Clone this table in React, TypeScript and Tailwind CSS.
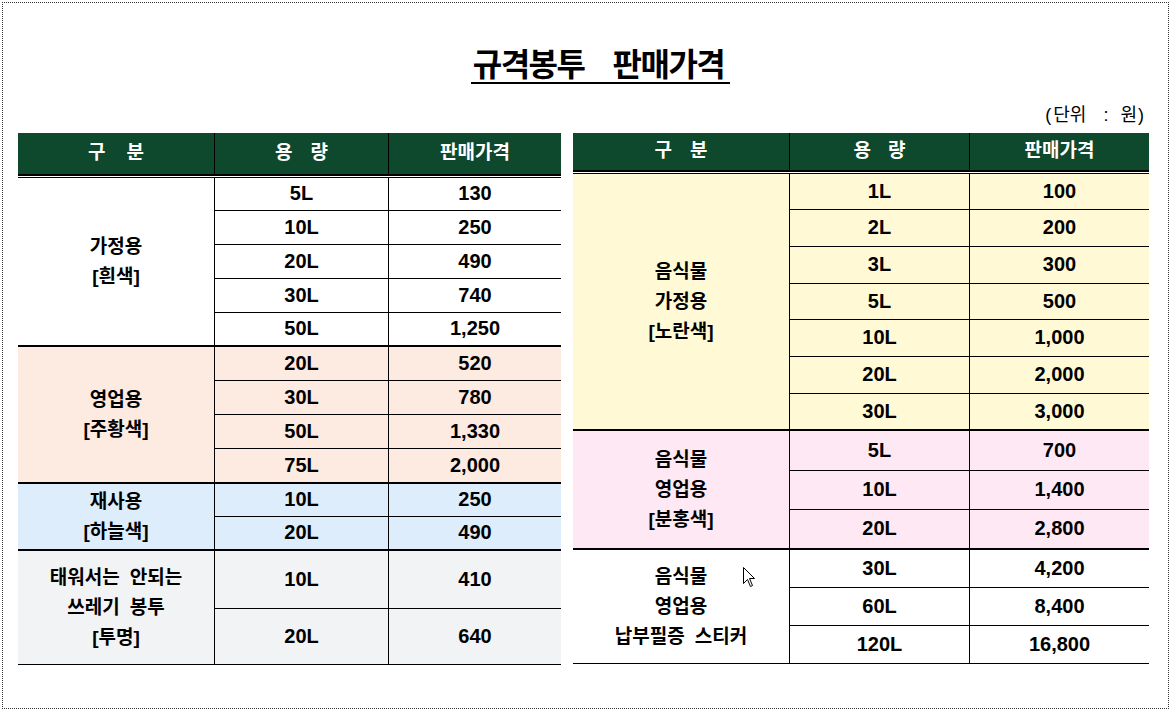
import React from "react";

type Row = [string, string, string];

interface Group {
  label: string[];
  bg: string;
  rows: Row[];
  last?: boolean;
}

const leftGroups: Group[] = [
  {
    label: ["가정용", "[흰색]"],
    bg: "bg-white",
    rows: [
      ["5L", "130", "h-[33px]"],
      ["10L", "250", "h-[34px]"],
      ["20L", "490", "h-[34px]"],
      ["30L", "740", "h-[34px]"],
      ["50L", "1,250", "h-[32px]"],
    ],
  },
  {
    label: ["영업용", "[주황색]"],
    bg: "bg-[#fdeae1]",
    rows: [
      ["20L", "520", "h-[34px]"],
      ["30L", "780", "h-[34px]"],
      ["50L", "1,330", "h-[34px]"],
      ["75L", "2,000", "h-[33px]"],
    ],
  },
  {
    label: ["재사용", "[하늘색]"],
    bg: "bg-[#ddedfc]",
    rows: [
      ["10L", "250", "h-[33px]"],
      ["20L", "490", "h-[32px]"],
    ],
  },
  {
    label: ["태워서는 안되는", "쓰레기 봉투", "[투명]"],
    bg: "bg-[#f2f3f5]",
    rows: [
      ["10L", "410", "h-[58px]"],
      ["20L", "640", "h-[55px]"],
    ],
    last: true,
  },
];

const rightGroups: Group[] = [
  {
    label: ["음식물", "가정용", "[노란색]"],
    bg: "bg-[#fff9d6]",
    rows: [
      ["1L", "100", "h-[36px]"],
      ["2L", "200", "h-[37px]"],
      ["3L", "300", "h-[37px]"],
      ["5L", "500", "h-[36px]"],
      ["10L", "1,000", "h-[37px]"],
      ["20L", "2,000", "h-[37px]"],
      ["30L", "3,000", "h-[35px]"],
    ],
  },
  {
    label: ["음식물", "영업용", "[분홍색]"],
    bg: "bg-[#fde8f3]",
    rows: [
      ["5L", "700", "h-[40px]"],
      ["10L", "1,400", "h-[39px]"],
      ["20L", "2,800", "h-[38px]"],
    ],
  },
  {
    label: ["음식물", "영업용", "납부필증 스티커"],
    bg: "bg-white",
    rows: [
      ["30L", "4,200", "h-[38px]"],
      ["60L", "8,400", "h-[38px]"],
      ["120L", "16,800", "h-[37px]"],
    ],
    last: true,
  },
];

function Label({ text }: { text: string }) {
  const parts = text.split(" ");
  return (
    <div className="whitespace-nowrap">
      {parts.map((p, i) => (
        <React.Fragment key={i}>
          {i > 0 && <span className="inline-block w-[10px]" />}
          {p}
        </React.Fragment>
      ))}
    </div>
  );
}

function Section({ g, w1, w2 }: { g: Group; w1: string; w2: string }) {
  return (
    <div className={`flex ${g.bg} ${g.last ? "border-b" : "border-b-2"} border-black`}>
      <div
        className={`${w1} shrink-0 border-r border-black flex flex-col items-center justify-center text-[19px] leading-[30px] font-bold`}
      >
        {g.label.map((l) => (
          <Label key={l} text={l} />
        ))}
      </div>
      <div className="flex-1 flex flex-col">
        {g.rows.map(([size, price, h], i) => (
          <div
            key={i}
            className={`flex ${h} ${i < g.rows.length - 1 ? "border-b border-black" : ""}`}
          >
            <div className={`${w2} shrink-0 border-r border-black flex items-center justify-center pb-[2px] text-[20px] font-bold`}>
              {size}
            </div>
            <div className="flex-1 flex items-center justify-center pb-[2px] text-[20px] font-bold">{price}</div>
          </div>
        ))}
      </div>
    </div>
  );
}

function Header({ w1, w2, h, gap1, gap2 }: { w1: string; w2: string; h: string; gap1: string; gap2: string }) {
  return (
    <>
      <div className={`flex ${h} bg-[#0e482d] text-white font-bold text-[19px]`}>
        <div className={`${w1} shrink-0 border-r border-black flex items-center justify-center ${gap1}`}>
          <span>구</span>
          <span>분</span>
        </div>
        <div className={`${w2} shrink-0 border-r border-black flex items-center justify-center ${gap2}`}>
          <span>용</span>
          <span>량</span>
        </div>
        <div className="flex-1 flex items-center justify-center">판매가격</div>
      </div>
      <div className="h-[2px] bg-black" />
      <div className="h-px bg-white" />
      <div className="h-px bg-black" />
    </>
  );
}

export default function App() {
  return (
    <div className="relative w-[1171px] h-[711px] bg-white p-[2px] text-black font-[family-name:'Liberation_Sans','Noto_Sans_CJK_KR',sans-serif]">
      <div className="w-[1167px] h-[707px] border border-dotted border-[#333]">
        {/* title */}
        <div className="flex justify-center pl-[30px] mt-[46px]">
          <div className="inline-block border-b-2 border-black pb-[1px] pl-[2px] pr-[6px] text-[32px] leading-[32px] font-bold tracking-[-1.5px] whitespace-nowrap">
            규격봉투<span className="inline-block w-[28px]" />판매가격
          </div>
        </div>

        <div className="flex justify-end pr-[24px] mt-[21px] h-[21px] text-[18px] leading-[21px]">
          <span>(</span>
          <span className="ml-[2px]">단위</span>
          <span className="ml-[17px]">:</span>
          <span className="ml-[12px]">원</span>
          <span className="ml-[1px]">)</span>
        </div>

        <div className="flex items-start gap-[12px] pl-[15px] mt-[7px]">
          <div className="w-[543px]">
            <Header w1="w-[197px]" w2="w-[174px]" h="h-[41px]" gap1="gap-[21px]" gap2="gap-[18px]" />
            {leftGroups.map((g, i) => (
              <Section key={i} g={g} w1="w-[197px]" w2="w-[174px]" />
            ))}
          </div>
          <div className="w-[576px]">
            <Header w1="w-[217px]" w2="w-[180px]" h="h-[37px]" gap1="gap-[18px]" gap2="gap-[17px]" />
            {rightGroups.map((g, i) => (
              <Section key={i} g={g} w1="w-[217px]" w2="w-[180px]" />
            ))}
          </div>
        </div>
      </div>

      {/* mouse cursor */}
      <svg className="absolute left-[743px] top-[567px]" width="13" height="21" viewBox="0 0 13 21">
        <path
          d="M0.5 0.5 L0.5 16.5 L4.5 12.5 L7.5 19.5 L9.5 18.5 L6.5 11.5 L11.5 11.5 Z"
          fill="white"
          stroke="black"
          strokeWidth="1"
        />
      </svg>
    </div>
  );
}
